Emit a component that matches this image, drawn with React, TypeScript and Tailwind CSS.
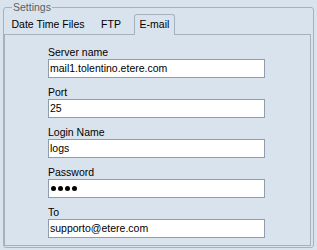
import React from "react";

const fields = [
  { label: "Server name", value: "mail1.tolentino.etere.com" },
  { label: "Port", value: "25" },
  { label: "Login Name", value: "logs" },
  { label: "Password", value: "", password: true },
  { label: "To", value: "supporto@etere.com" },
];

function Field({ label, value, password }: { label: string; value: string; password?: boolean }) {
  return (
    <div className="flex flex-col">
      <div className="h-[13px] leading-[13px] text-black">{label}</div>
      <div className="w-[217px] h-[19px] border border-[#8d9dad] bg-white flex items-center pl-[1px] text-black">
        {password ? (
          <div className="flex gap-[2px] pl-[1px]">
            <span className="w-[5px] h-[5px] rounded-full bg-black" />
            <span className="w-[5px] h-[5px] rounded-full bg-black" />
            <span className="w-[5px] h-[5px] rounded-full bg-black" />
            <span className="w-[5px] h-[5px] rounded-full bg-black" />
          </div>
        ) : (
          <span className="leading-[13px]">{value}</span>
        )}
      </div>
    </div>
  );
}

export default function App() {
  return (
    <div className="w-[317px] h-[250px] bg-[#d9e3ed] pt-[7px] pl-[3px] font-['Liberation_Sans',Arial,sans-serif] text-[10.5px]">
      <div className="relative w-[311px] h-[241px] border border-[#a4b2c0] rounded-[3px] pt-[6px]">
        <div className="absolute -top-[7px] left-[8px] px-[1px] bg-[#d9e3ed] leading-[13px] text-[#5a5f66]">
          Settings
        </div>

        {/* tab strip */}
        <div className="flex items-end h-[20px] pl-[1px]">
          <div className="w-[86px] h-[18px] flex items-center justify-center text-black">Date Time Files</div>
          <div className="w-[40px] h-[18px] flex items-center justify-center text-black">FTP</div>
          <div className="relative z-10 ml-[3px] w-[41px] h-[21px] -mb-[1px] border border-b-0 border-[#a4b2c0] rounded-t-[3px] bg-[#d9e3ed] flex items-center justify-center text-black">
            E-mail
          </div>
        </div>

        {/* tab page */}
        <div className="w-[307px] h-[212px] border border-[#a4b2c0] pt-[11px] pl-[43px] flex flex-col gap-[8px]">
          {fields.map((f) => (
            <Field key={f.label} label={f.label} value={f.value} password={f.password} />
          ))}
        </div>
      </div>
    </div>
  );
}
